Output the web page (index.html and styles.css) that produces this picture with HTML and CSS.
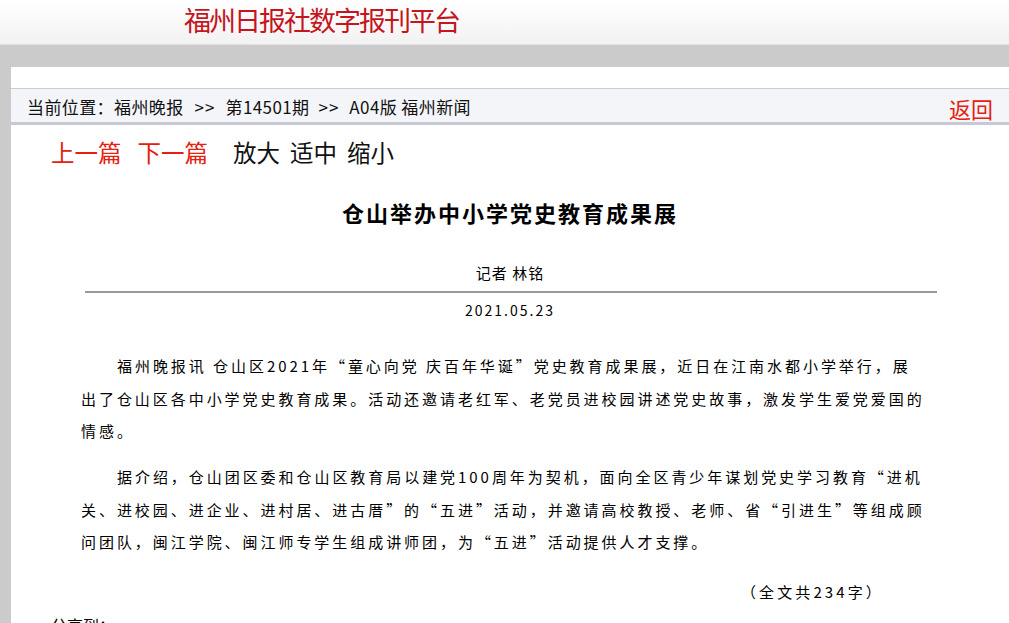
FILE: index.html
```html
<!DOCTYPE html>
<html lang="zh-CN">
<head>
<meta charset="utf-8">
<title>仓山举办中小学党史教育成果展</title>
<link rel="stylesheet" href="styles.css">
</head>
<body>
<header class="site-header">
  <div class="site-title">福州日报社数字报刊平台</div>
</header>
<div class="page">
  <div class="content">
    <div class="crumb">
      <div class="crumb-path"><span>当前位置：福州晚报</span><span class="sep first">&gt;&gt;</span><span>第14501期</span><span class="sep">&gt;&gt;</span><span>A04版 福州新闻</span></div>
      <a class="back">返回</a>
    </div>
    <div class="toolbar">
      <a class="nav red">上一篇</a>
      <a class="nav red next">下一篇</a>
      <a class="nav zoom first">放大</a>
      <a class="nav zoom">适中</a>
      <a class="nav zoom">缩小</a>
    </div>
    <h1 class="headline">仓山举办中小学党史教育成果展</h1>
    <div class="byline">记者 林铭</div>
    <hr class="rule">
    <div class="date">2021.05.23</div>
    <div class="article">
      <p>福州晚报讯 仓山区2021年“童心向党 庆百年华诞”党史教育成果展，近日在江南水都小学举行，展出了仓山区各中小学党史教育成果。活动还邀请老红军、老党员进校园讲述党史故事，激发学生爱党爱国的情感。</p>
      <p>据介绍，仓山团区委和仓山区教育局以建党100周年为契机，面向全区青少年谋划党史学习教育“进机关、进校园、进企业、进村居、进古厝”的“五进”活动，并邀请高校教授、老师、省“引进生”等组成顾问团队，闽江学院、闽江师专学生组成讲师团，为“五进”活动提供人才支撑。</p>
    </div>
    <div class="count">（全文共234字）</div>
    <div class="share">分享到：</div>
  </div>
</div>
</body>
</html>
```
FILE: styles.css
```css
html, body {
  margin: 0;
  padding: 0;
}
body {
  background: #cbcbcb;
  font-family: "Noto Sans CJK SC", "Microsoft YaHei", sans-serif;
  color: #000;
  overflow: hidden;
}
.site-header {
  height: 44px;
  background: linear-gradient(#ffffff, #f2f2f2);
  border-bottom: 1px solid #e2e2e2;
}
.site-title {
  padding-left: 184px;
  font-size: 27px;
  letter-spacing: -2px;
  line-height: 40px;
  color: #c4161c;
}
.page {
  padding-top: 22px;
}
.content {
  margin-left: 11px;
  background: #fff;
  padding-top: 21px;
  height: 600px;
}
.crumb {
  border-top: 1px solid #c9ccda;
  border-bottom: 3px solid #c7cad5;
  background: #f4f5f9;
  height: 33px;
  display: flex;
  align-items: center;
  justify-content: space-between;
  padding: 0 16px;
}
.crumb-path {
  font-size: 17px;
  line-height: 20px;
  padding-top: 2px;
  letter-spacing: 0.4px;
  color: #111;
}
.sep {
  margin: 0 10px 0 9px;
  letter-spacing: 1px;
}
.sep.first {
  margin-left: 11px;
}
.back {
  font-size: 22px;
  line-height: 24px;
  color: #e5200e;
  padding-top: 4px;
}
.toolbar {
  display: flex;
  margin-top: 12px;
  padding-left: 40px;
  line-height: 30px;
  font-size: 23.5px;
}
.nav {
  color: #111;
}
.nav.red {
  color: #e5200e;
}
.nav.next {
  margin-left: 16px;
}
.nav.zoom {
  margin-left: 10px;
}
.nav.zoom.first {
  margin-left: 25px;
}
.headline {
  margin: 30px 0 0;
  text-align: center;
  font-size: 22px;
  line-height: 30px;
  letter-spacing: 2px;
  font-weight: bold;
}
.byline {
  margin-top: 36px;
  text-align: center;
  font-size: 15px;
  line-height: 20px;
  letter-spacing: 1px;
}
.rule {
  margin: 8px 72px 0 74px;
  border: 0;
  border-top: 2px solid #999;
  height: 0;
}
.date {
  margin-top: 7px;
  text-align: center;
  font-size: 14px;
  line-height: 20px;
  letter-spacing: 2px;
}
.article {
  margin-top: 30px;
  padding-left: 70px;
  width: 845px;
}
.article p {
  margin: 0 0 13.5px;
  font-size: 15px;
  line-height: 32.5px;
  letter-spacing: 2.95px;
  text-indent: 36px;
}
.count {
  margin-top: 23px;
  padding-left: 730px;
  font-size: 15px;
  line-height: 20px;
  letter-spacing: 3.1px;
}
.share {
  margin-top: 13px;
  padding-left: 40px;
  font-size: 16px;
  line-height: 20px;
}
```
